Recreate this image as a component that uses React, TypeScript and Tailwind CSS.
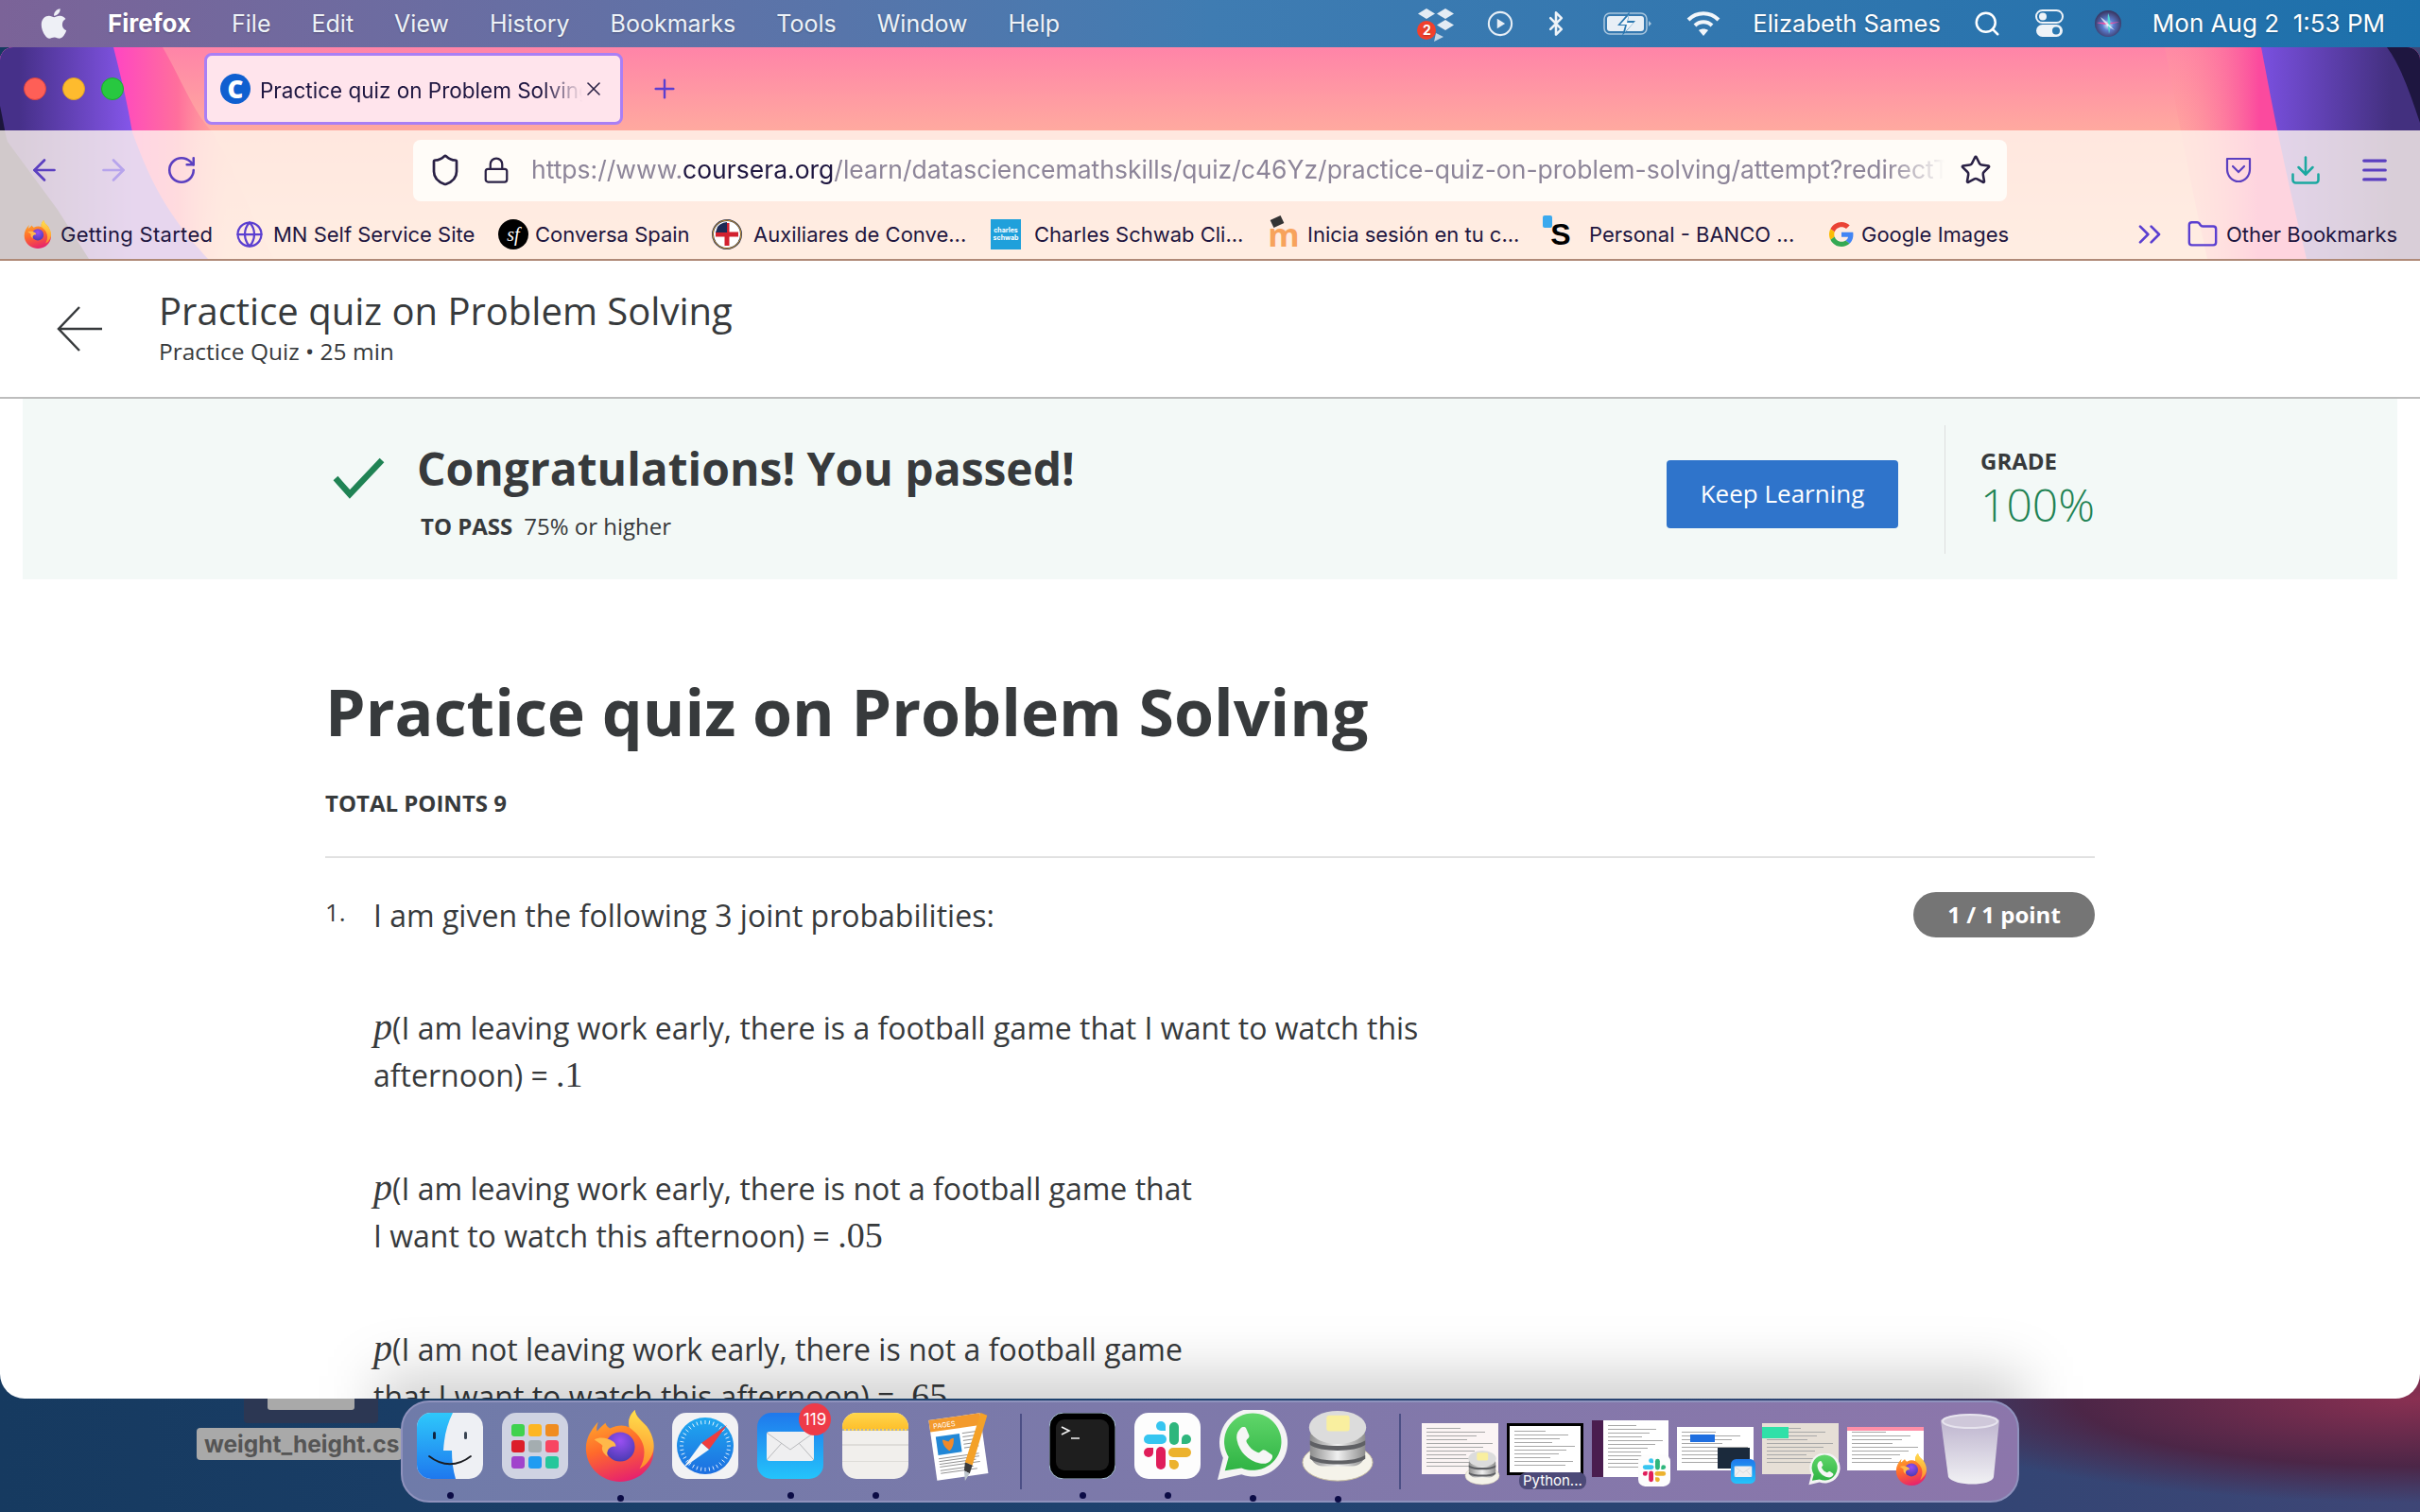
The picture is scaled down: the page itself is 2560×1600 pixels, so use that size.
import { Bluetooth, ChevronsRight, Download, Folder, Globe, Lock, Menu, Plus, RotateCw, Search, Shield, Star, ArrowLeft, ArrowRight, X } from 'lucide-react'
import { FaApple } from 'react-icons/fa'

const menuItems = ['File', 'Edit', 'View', 'History', 'Bookmarks', 'Tools', 'Window', 'Help']

function Dropbox() {
  return (
    <div className="relative h-[40px] w-[40px]">
      <svg viewBox="0 0 40 40" className="h-[40px] w-[40px]">
        <path d="M10 4l9 5.500-9 5.500-9-5.500z M30 4l9 5.500-9 5.500-9-5.500z M30 16l9 5.500-9 5.500-9-5.500z" fill="#e4ecf4" />
        <path d="M20 30l-2 9 10-5z" fill="#c4d5e6" />
      </svg>
      <span className="absolute bottom-[3px] left-0 flex h-[20px] w-[20px] items-center justify-center rounded-full bg-[#f2402c] text-[14px] font-bold leading-none text-white">2</span>
    </div>
  )
}

function Battery() {
  return (
    <svg viewBox="0 0 52 26" className="h-[26px] w-[52px]">
      <rect x="1" y="2" width="45" height="22" rx="6" fill="none" stroke="#a9c6de" strokeWidth="1.500" />
      <rect x="4" y="5" width="39" height="16" rx="3" fill="#e8eff6" />
      <path d="M48 10l3 3-3 3z" fill="#a9c6de" />
      <path d="M28 0L15 15h8l-3 11 14-16h-8z" fill="#2a77b0" />
      <path d="M27 4l-9 10h7l-2 8 9-10h-7z" fill="#f2f6fa" />
    </svg>
  )
}

function Toggles() {
  return (
    <svg viewBox="0 0 30 30" className="h-[30px] w-[30px]">
      <rect x="1" y="1" width="28" height="13" rx="6.500" fill="none" stroke="#eef3f8" strokeWidth="2" />
      <circle cx="8" cy="7.500" r="4" fill="#eef3f8" />
      <rect x="1" y="16" width="28" height="13" rx="6.500" fill="#eef3f8" />
      <circle cx="22" cy="22.500" r="4" fill="#2a77b0" />
    </svg>
  )
}

function Siri() {
  return (
    <svg viewBox="0 0 30 30" className="h-[30px] w-[30px]">
      <defs>
        <radialGradient id="siri-bg" cx="50%" cy="55%" r="60%">
          <stop offset="0%" stopColor="#e8f4ff" />
          <stop offset="35%" stopColor="#5b7ed0" />
          <stop offset="100%" stopColor="#33264a" />
        </radialGradient>
      </defs>
      <circle cx="15" cy="15" r="14" fill="url(#siri-bg)" />
      <path d="M3 14c6-1 10 1 24-1-8 3-16 4-24 1z" fill="#ec4fa0" />
      <path d="M15 4c-1 6 0 14 1 22 2-8 2-16-1-22z" fill="#54d6d0" />
      <path d="M7 8c5 3 10 9 15 14-6-3-12-8-15-14z" fill="#ffffff" opacity="0.7" />
    </svg>
  )
}

function MenuBar() {
  return (
    <div className="flex h-[50px] shrink-0 items-center justify-between bg-gradient-to-r from-[#7b6398] via-[#3f7cb2] to-[#1c70ab] pr-[37px] pl-[42px] font-['Inter',sans-serif] text-[25px] leading-none text-white [text-shadow:0_1px_2px_rgba(0,0,0,0.25)]">
      <div className="flex items-center gap-[43px]">
        <div className="flex items-center gap-[42px]">
          <FaApple className="h-[36px] w-[30px] text-[#eef0f6]" />
          <span className="text-[26px] font-bold">Firefox</span>
        </div>
        {menuItems.map((item) => (
          <span key={item} className="text-[#eef3f8]">{item}</span>
        ))}
      </div>
      <div className="flex items-center">
        <Dropbox />
        <svg viewBox="0 0 30 30" className="ml-[34px] h-[28px] w-[28px]">
          <circle cx="15" cy="15" r="13" fill="none" stroke="#e8eff6" strokeWidth="2.200" />
          <path d="M11.500 9.500l9 5.500-9 5.500z" fill="#e8eff6" />
        </svg>
        <Bluetooth className="ml-[31px] h-[36px] w-[28px] text-[#eef3f8]" strokeWidth={2.2} />
        <div className="ml-[36px]"><Battery /></div>
        <svg viewBox="0 0 36 28" className="ml-[36px] h-[28px] w-[36px]" fill="none" stroke="#f2f6fa" strokeWidth="4">
          <path d="M2 10c9-9 23-9 32 0" />
          <path d="M9 16c5-5 13-5 18 0" />
          <path d="M18 27l-5-6c3-2 7-2 10 0z" fill="#f2f6fa" stroke="none" />
        </svg>
        <span className="ml-[34px] text-[25.500px]">Elizabeth Sames</span>
        <Search className="ml-[34px] h-[30px] w-[30px]" strokeWidth={2} />
        <div className="ml-[36px]"><Toggles /></div>
        <div className="ml-[32px]"><Siri /></div>
        <span className="ml-[32px] text-[26px] whitespace-pre">Mon Aug 2  1:53 PM</span>
      </div>
    </div>
  )
}

function Wallpaper() {
  return (
    <svg viewBox="0 0 2560 224" preserveAspectRatio="none" className="absolute inset-0 h-[224px] w-[2560px]">
      <defs>
        <linearGradient id="sky" x1="0" y1="0" x2="0" y2="1">
          <stop offset="0%" stopColor="#ff84a8" />
          <stop offset="40%" stopColor="#ffaa9f" />
          <stop offset="100%" stopColor="#ffc9b0" />
        </linearGradient>
        <linearGradient id="swoosh-left" gradientUnits="userSpaceOnUse" x1="110" y1="0" x2="240" y2="0">
          <stop offset="0%" stopColor="#ff3fc8" />
          <stop offset="60%" stopColor="#ff6f9c" />
          <stop offset="100%" stopColor="#ff9f9c" stopOpacity="0.2" />
        </linearGradient>
        <linearGradient id="purple-left" gradientUnits="userSpaceOnUse" x1="20" y1="0" x2="140" y2="0">
          <stop offset="0%" stopColor="#463089" />
          <stop offset="100%" stopColor="#8556ea" />
        </linearGradient>
        <linearGradient id="swoosh-right" gradientUnits="userSpaceOnUse" x1="2290" y1="0" x2="2390" y2="0">
          <stop offset="0%" stopColor="#ff9f9c" stopOpacity="0.2" />
          <stop offset="100%" stopColor="#fb4a9e" />
        </linearGradient>
        <linearGradient id="purple-right" gradientUnits="userSpaceOnUse" x1="2392" y1="0" x2="2530" y2="0">
          <stop offset="0%" stopColor="#7a50e0" />
          <stop offset="100%" stopColor="#43307f" />
        </linearGradient>
      </defs>
      <rect width="2560" height="224" fill="url(#sky)" />
      <path d="M0 0H172C190 30 205 70 225 90C250 130 265 180 290 224H0z" fill="url(#swoosh-left)" />
      <path d="M0 0H120C130 40 135 60 140 90C155 130 170 170 220 224H0z" fill="url(#purple-left)" />
      <path d="M0 62C4 80 5 90 8 100L61 172L94 224H0z" fill="#1c163c" />
      <path d="M2560 0H2290C2300 50 2310 110 2335 224H2560z" fill="url(#swoosh-right)" />
      <path d="M2560 0H2392C2400 40 2410 100 2440 224H2560z" fill="url(#purple-right)" />
      <path d="M2560 0H2525C2540 20 2550 50 2560 80z" fill="#1e1640" />
    </svg>
  )
}

function Favicon() {
  return (
    <div className="flex h-[32px] w-[32px] shrink-0 items-center justify-center rounded-full bg-[#0f5fd0] font-['Open_Sans',sans-serif] text-[26px] leading-none font-extrabold text-white">C</div>
  )
}

function TabStrip() {
  return (
    <div className="relative flex h-[88px] shrink-0 items-center">
      <div className="ml-[25px] flex w-[191px] gap-[17px]">
        <span className="h-[24px] w-[24px] rounded-full border border-[#e0443e] bg-[#fe5f57]" />
        <span className="h-[24px] w-[24px] rounded-full border border-[#dea123] bg-[#febb2e]" />
        <span className="h-[24px] w-[24px] rounded-full border border-[#1aab29] bg-[#28c840]" />
      </div>
      <div className="flex h-[76px] w-[443px] items-center rounded-[8px] border-[3px] border-[#a97ff5] bg-[#ffe4ec] pr-[16px] pl-[14px]">
        <Favicon />
        <span className="mt-[3px] ml-[10px] flex-1 overflow-hidden font-['Inter',sans-serif] text-[22.500px] whitespace-nowrap text-[#1e1640] [mask-image:linear-gradient(to_right,black_88%,transparent)]">Practice quiz on Problem Solving</span>
        <X className="h-[24px] w-[24px] text-[#2a2145]" strokeWidth={1.6} />
      </div>
      <Plus className="ml-[28px] h-[32px] w-[32px] text-[#5b3fd0]" strokeWidth={1.8} />
    </div>
  )
}

function Toolbar() {
  return (
    <div className="relative flex h-[84px] shrink-0 items-center bg-[#fff6ef]/80">
      <div className="flex w-[437px] items-center pl-[29px]">
        <ArrowLeft className="h-[36px] w-[36px] text-[#5b3fc0]" strokeWidth={1.8} />
        <ArrowRight className="ml-[37px] h-[36px] w-[36px] text-[#b7a4ec]" strokeWidth={1.8} />
        <RotateCw className="ml-[37px] h-[34px] w-[34px] text-[#5b3fc0]" strokeWidth={1.8} />
      </div>
      <div className="flex h-[65px] w-[1686px] items-center rounded-[8px] bg-[#fffcf8] pr-[16px] pl-[16px]">
        <Shield className="h-[36px] w-[36px] shrink-0 text-[#2a2145]" strokeWidth={1.8} />
        <Lock className="ml-[21px] h-[34px] w-[30px] shrink-0 text-[#2a2145]" strokeWidth={1.8} />
        <span className="ml-[22px] flex-1 overflow-hidden font-['Inter',sans-serif] text-[26.500px] whitespace-nowrap text-[#8d8599] [mask-image:linear-gradient(to_right,black_96%,transparent)]">
          https://www.<span className="text-[#1e1640]">coursera.org</span>/learn/datasciencemathskills/quiz/c46Yz/practice-quiz-on-problem-solving/attempt?redirectToCover=true
        </span>
        <Star className="ml-[16px] h-[34px] w-[34px] shrink-0 text-[#2a2145]" strokeWidth={1.8} />
      </div>
      <div className="ml-[230px] flex items-center">
        <svg viewBox="0 0 30 30" className="h-[30px] w-[30px]" fill="none" stroke="#5b3fc0" strokeWidth="2.200">
          <path d="M3 3h24v11a12 13 0 0 1-24 0z" strokeLinejoin="round" />
          <path d="M9 11l6 6 6-6" strokeLinecap="round" />
        </svg>
        <Download className="ml-[38px] h-[36px] w-[36px] text-[#1aa8a0]" strokeWidth={1.7} />
        <Menu className="ml-[38px] h-[34px] w-[34px] text-[#5b3fc0]" strokeWidth={2.2} />
      </div>
    </div>
  )
}

function GoogleG() {
  return (
    <svg viewBox="0 0 48 48" className="h-[26px] w-[26px]">
      <path fill="#EA4335" d="M24 9.500c3.540 0 6.710 1.220 9.210 3.600l6.850-6.850C35.900 2.380 30.470 0 24 0 14.620 0 6.510 5.380 2.560 13.220l7.980 6.190C12.430 13.720 17.740 9.500 24 9.500z" />
      <path fill="#4285F4" d="M46.980 24.550c0-1.570-.15-3.090-.38-4.550H24v9.020h12.940c-.58 2.960-2.260 5.480-4.780 7.180l7.730 6c4.510-4.180 7.090-10.360 7.090-17.650z" />
      <path fill="#FBBC05" d="M10.530 28.590c-.48-1.450-.76-2.990-.76-4.590s.27-3.140.76-4.590l-7.980-6.190C.92 16.460 0 20.120 0 24c0 3.880.92 7.540 2.560 10.780l7.970-6.190z" />
      <path fill="#34A853" d="M24 48c6.480 0 11.930-2.130 15.890-5.810l-7.730-6c-2.150 1.450-4.920 2.300-8.160 2.300-6.260 0-11.570-4.220-13.470-9.910l-7.980 6.190C6.510 42.620 14.620 48 24 48z" />
    </svg>
  )
}

function FlagIcon() {
  return (
    <svg viewBox="0 0 32 32" className="h-[32px] w-[32px]">
      <circle cx="16" cy="16" r="15" fill="#fff" stroke="#1d2a55" strokeWidth="2" />
      <path d="M4 16h24M16 4v24" stroke="#d2202f" strokeWidth="5" />
      <path d="M6 8a14 14 0 0 1 10-5v11H4z" fill="#1d2a55" />
      <circle cx="16" cy="16" r="15" fill="none" stroke="#c8942e" strokeWidth="1" />
    </svg>
  )
}

function MoodleIcon() {
  return (
    <div className="relative font-['Open_Sans',sans-serif] text-[34px] leading-[30px] font-bold text-[#f7a35c]">
      <span className="absolute -top-[3px] left-[4px] h-[9px] w-[12px] -rotate-[25deg] bg-[#333]" />
      m
    </div>
  )
}

function Bookmark({ icon, label, className }: { icon: React.ReactNode; label: string; className: string }) {
  return (
    <div className={`flex shrink-0 items-center ${className}`}>
      <div className="flex w-[32px] shrink-0 justify-center">{icon}</div>
      <span>{label}</span>
    </div>
  )
}

function BookmarksBar() {
  return (
    <div className="relative flex h-[52px] shrink-0 items-center bg-[#fff6ef]/80 pl-[24px] font-['Inter',sans-serif] text-[22px] whitespace-nowrap text-[#1e1640]">
      <Bookmark className="w-[224px] gap-[8px] tracking-[0.3px]" label="Getting Started" icon={<FirefoxIcon size={30} />} />
      <Bookmark className="w-[279px] gap-[9px]" label="MN Self Service Site" icon={<Globe className="h-[30px] w-[30px] text-[#5b3fd0]" strokeWidth={1.8} />} />
      <Bookmark className="w-[226px] gap-[7px]" label="Conversa Spain" icon={<div className="flex h-[32px] w-[32px] items-center justify-center rounded-full bg-black font-['Liberation_Serif',serif] text-[20px] text-white italic">sf</div>} />
      <Bookmark className="w-[295px] gap-[12px]" label="Auxiliares de Conve..." icon={<FlagIcon />} />
      <Bookmark className="w-[294px] gap-[14px]" label="Charles Schwab Cli..." icon={<div className="flex h-[32px] w-[32px] items-center justify-center bg-[#1fa0db] text-center text-[7px] leading-[8px] font-bold text-white">charles<br />schwab</div>} />
      <Bookmark className="w-[293px] gap-[9px]" label="Inicia sesión en tu c..." icon={<MoodleIcon />} />
      <Bookmark className="w-[297px] gap-[14px]" label="Personal - BANCO ..." icon={<div className="relative font-['Liberation_Sans',sans-serif] text-[32px] leading-[32px] font-bold text-black"><span className="absolute -top-[4px] -left-[8px] h-[13px] w-[10px] rounded-[2px] bg-[#3ba9ee]" />S</div>} />
      <Bookmark className="w-[322px] gap-[5px]" label="Google Images" icon={<GoogleG />} />
      <ChevronsRight className="h-[40px] w-[40px] shrink-0 text-[#5b3fd0]" strokeWidth={1.6} />
      <Folder className="ml-[19px] h-[34px] w-[34px] shrink-0 text-[#5b3fd0]" strokeWidth={1.7} />
      <span className="ml-[8px]">Other Bookmarks</span>
    </div>
  )
}

function Equation({ lines }: { lines: [string, string, string] }) {
  return (
    <p className="mt-[70px] w-[1120px] text-[32px] leading-[50px]">
      <span className="font-['Liberation_Serif',serif] text-[40px] leading-none italic">p</span>
      {lines[0]}
      <br />
      {lines[1]}
      <span className="font-['Liberation_Serif',serif] text-[38px] leading-none">{lines[2]}</span>
    </p>
  )
}

function CoursePage() {
  return (
    <div className="relative flex-1 overflow-hidden bg-white font-['Open_Sans',sans-serif] text-[#373a3c]">
      <header className="flex h-[146px] items-center border-b-2 border-[#bdbdbd]">
        <svg viewBox="0 0 50 48" className="ml-[60px] h-[48px] w-[50px]" fill="none" stroke="#373a3c" strokeWidth="2.500">
          <path d="M24 1L2 24l22 23M2 24h46" />
        </svg>
        <div className="ml-[58px] -mt-[6px]">
          <div className="text-[40px] leading-[52px] font-normal">Practice quiz on Problem Solving</div>
          <div className="mt-[2px] text-[24.500px] leading-[30px] font-normal">Practice Quiz • 25 min</div>
        </div>
      </header>

      <section className="mx-[24px] flex h-[191px] items-center bg-[#f3f9f7] pr-[320px] pl-[328px]">
        <svg viewBox="0 0 56 46" className="mb-[22px] h-[46px] w-[56px] shrink-0" fill="none" stroke="#1f8354" strokeWidth="6.500">
          <path d="M3 22l15 17L52 3" />
        </svg>
        <div className="ml-[33px] flex-1">
          <div className="text-[48px] leading-[64px] font-bold">Congratulations! You passed!</div>
          <div className="mt-[14px] ml-[4px] text-[24px] leading-[30px] font-normal">
            <span className="font-bold">TO PASS</span>
            <span className="ml-[12px]">75% or higher</span>
          </div>
        </div>
        <button className="mt-[10px] flex h-[72px] w-[245px] items-center justify-center rounded-[4px] bg-[#2f74cb] text-[26px] font-normal text-white">Keep Learning</button>
        <div className="ml-[49px] flex h-[136px] w-[159px] flex-col justify-center border-l border-[#dcdfde] pl-[37px]">
          <div className="text-[24px] leading-[30px] font-bold">GRADE</div>
          <div className="mt-[3px] text-[48px] leading-[56px] font-light text-[#1f8354]">100%</div>
        </div>
      </section>

      <main className="mx-[344px]">
        <h1 className="mt-[92px] text-[68px] leading-[96px] font-bold">Practice quiz on Problem Solving</h1>
        <div className="mt-[33px] text-[24px] leading-[32px] font-bold">TOTAL POINTS 9</div>
        <div className="mt-[40px] h-[2px] bg-[#e1e1e1]" />
        <div className="mt-[36px] flex items-start">
          <span className="mt-[3px] w-[51px] text-[26px] leading-[36px] font-normal">1.</span>
          <div className="flex-1">
            <div className="flex items-start justify-between">
              <p className="mt-[1px] text-[32px] leading-[48px]">I am given the following 3 joint probabilities:</p>
              <span className="flex h-[48px] w-[192px] items-center justify-center rounded-full bg-[#757575] text-[24px] font-bold text-white">1 / 1 point</span>
            </div>
            <Equation lines={['(I am leaving work early, there is a football game that I want to watch this', 'afternoon) = ', '.1']} />
            <Equation lines={['(I am leaving work early, there is not a football game that', 'I want to watch this afternoon) = ', '.05']} />
            <Equation lines={['(I am not leaving work early, there is not a football game', 'that I want to watch this afternoon) = ', '.65']} />
          </div>
        </div>
      </main>
      <div className="pointer-events-none absolute right-[420px] -bottom-[46px] left-[400px] h-[70px] bg-black/20 blur-[30px]" />
    </div>
  )
}

function FinderIcon() {
  return (
    <svg viewBox="0 0 70 70" className="h-[70px] w-[70px]">
      <defs>
        <linearGradient id="finder-blue" x1="0" y1="0" x2="0" y2="1">
          <stop offset="0%" stopColor="#2ec8fb" />
          <stop offset="100%" stopColor="#1e78ee" />
        </linearGradient>
      </defs>
      <rect width="70" height="70" rx="15" fill="#eef0f4" />
      <path d="M15 0h23c-6 12-9 24-10 40h9c0 10 1 20 4 30H15A15 15 0 0 1 0 55V15A15 15 0 0 1 15 0z" fill="url(#finder-blue)" />
      <rect x="17" y="20" width="3" height="8" rx="1.500" fill="#11243f" />
      <rect x="50" y="20" width="3" height="8" rx="1.500" fill="#394452" />
      <path d="M13 46c14 11 30 11 44 0" fill="none" stroke="#1b1d22" strokeWidth="1.800" strokeLinecap="round" />
    </svg>
  )
}

function LaunchpadIcon() {
  const cells = ['#3fd24f', '#fdb623', '#f08c1f', '#dc1e2a', '#a4adb0', '#f84561', '#a044cc', '#1f9cf2', '#25c79b']
  return (
    <div className="grid h-[70px] w-[70px] grid-cols-3 content-center justify-center gap-[4px] rounded-[15px] bg-[#cfd3e2] px-[10px]">
      {cells.map((color) => (
        <span key={color} className="h-[13px] w-[14px] rounded-[3px]" style={{ backgroundColor: color }} />
      ))}
    </div>
  )
}

function FirefoxIcon({ size }: { size: number }) {
  return (
    <svg viewBox="0 0 76 78" style={{ width: size, height: size }}>
      <defs>
        <linearGradient id="ff-body" x1="0.3" y1="0" x2="0.6" y2="1">
          <stop offset="0%" stopColor="#ffb32c" />
          <stop offset="50%" stopColor="#ff6a2b" />
          <stop offset="100%" stopColor="#e6206f" />
        </linearGradient>
        <linearGradient id="ff-flame" x1="0.6" y1="0" x2="0.5" y2="1">
          <stop offset="0%" stopColor="#ffe44e" />
          <stop offset="100%" stopColor="#ff8a2a" />
        </linearGradient>
        <radialGradient id="ff-globe" cx="50%" cy="30%" r="70%">
          <stop offset="0%" stopColor="#9a4ff2" />
          <stop offset="100%" stopColor="#4b3bb4" />
        </radialGradient>
      </defs>
      <path d="M14 13c-1 5-2 7-1 10 3-4 6-6 9-9 1 3 2 4 5 6 8-4 16-4 21-1-2-8 1-14 6-19 1 8 8 12 13 18 1 2 2 5 3 8 3 8 5 15 4 22-1 16-17 30-36 30S2 64 1 44c-1-12 5-22 13-31z" fill="url(#ff-body)" />
      <path d="M48 19c-2-8 1-14 6-19 1 8 8 12 13 18 6 8 9 18 7 27-3 10-9 16-15 19 6-10 7-22 2-31-3-6-8-10-13-14z" fill="url(#ff-flame)" />
      <circle cx="38" cy="40" r="16" fill="url(#ff-globe)" />
      <path d="M10 32c6-3 14-2 20 2 2 1 4 4 3 6-2-1-5 0-8 3-1 3-2 5 0 8-5-3-8-8-6-12-2-3-6-4-9-7z" fill="#ffb84a" />
    </svg>
  )
}

function SafariIcon() {
  const ticks = Array.from({ length: 36 }, (_, i) => i * 10)
  return (
    <svg viewBox="0 0 70 70" className="h-[70px] w-[70px]">
      <defs>
        <linearGradient id="safari-face" x1="0" y1="0" x2="0" y2="1">
          <stop offset="0%" stopColor="#1fa8f0" />
          <stop offset="100%" stopColor="#1d6ee0" />
        </linearGradient>
      </defs>
      <rect width="70" height="70" rx="15" fill="#f2f2f4" />
      <circle cx="35" cy="35" r="30" fill="url(#safari-face)" />
      {ticks.map((deg) => (
        <line key={deg} x1="35" y1="8" x2="35" y2="12" stroke="#ffffff" strokeWidth="0.800" transform={`rotate(${deg} 35 35)`} />
      ))}
      <path d="M58 13L31 32l8 7z" fill="#ef3d3d" />
      <path d="M12 58l19-26 8 7z" fill="#f4f6f8" />
    </svg>
  )
}

function MailGlyph({ size }: { size: number }) {
  return (
    <svg viewBox="0 0 70 70" style={{ width: size, height: size }}>
      <defs>
        <linearGradient id="mail-bg" x1="0" y1="0" x2="0" y2="1">
          <stop offset="0%" stopColor="#1f78ec" />
          <stop offset="100%" stopColor="#24c4fb" />
        </linearGradient>
      </defs>
      <rect width="70" height="70" rx="15" fill="url(#mail-bg)" />
      <rect x="10" y="20" width="50" height="31" rx="3" fill="#efeff0" />
      <path d="M10 21l25 18 25-18M10 50l16-18M60 50L44 32" fill="none" stroke="#b9babd" strokeWidth="1" />
    </svg>
  )
}

function MailIcon() {
  return (
    <div className="relative h-[70px] w-[70px]">
      <MailGlyph size={70} />
      <span className="absolute -top-[10px] -right-[8px] flex h-[34px] w-[34px] items-center justify-center rounded-full bg-[#ee3b48] font-['Inter',sans-serif] text-[17px] leading-none text-white">119</span>
    </div>
  )
}

function NotesIcon() {
  return (
    <div className="flex h-[70px] w-[70px] flex-col overflow-hidden rounded-[15px] bg-[#f1efec]">
      <div className="h-[19px] border-b-2 border-dotted border-[#b5b0a4] bg-gradient-to-b from-[#ffd64a] to-[#fdc02c]" />
      <div className="mt-[14px] h-[2px] bg-[#dedcd8]" />
      <div className="mt-[16px] h-[1px] bg-[#dedcd8]" />
    </div>
  )
}

function PagesIcon() {
  return (
    <svg viewBox="0 0 72 80" className="h-[78px] w-[72px]">
      <g transform="rotate(-8 34 42)">
        <rect x="6" y="8" width="56" height="66" fill="#ffffff" />
        <rect x="6" y="8" width="56" height="13" fill="#f39a2c" />
        <rect x="11" y="27" width="26" height="20" fill="#2287d6" />
        <path d="M24 44c-4-3-7-9-6-13 3 1 4 2 6 3 2-2 3-3 6-3 0 5-2 10-6 13z" fill="#f0892a" />
        <path d="M11 51h44M11 54h44M11 57h40M11 60h44M11 64h36M11 67h40M40 27h16M40 31h16M40 35h16M40 39h16M40 43h16" stroke="#8a8a8a" strokeWidth="0.900" />
        <text x="10" y="18" fontFamily="Inter, sans-serif" fontSize="7.500" fill="#ffffff">PAGES</text>
      </g>
      <path d="M58 4l7 3-16 54-8-3z" fill="#f4a128" />
      <path d="M41 58l8 3-3 9-6-3z" fill="#3a3a3a" />
      <path d="M40 67l6 3-5 8z" fill="#bcc5cc" />
    </svg>
  )
}

function TerminalIcon() {
  return (
    <svg viewBox="0 0 70 70" className="h-[70px] w-[70px]">
      <rect width="70" height="70" rx="15" fill="#000" stroke="#a9c3d4" strokeWidth="1" />
      <rect x="7" y="7" width="56" height="54" rx="9" fill="#1e1e1e" />
      <path d="M13 15l8 4-8 4M23 27h9" fill="none" stroke="#f2f2f2" strokeWidth="1.700" />
    </svg>
  )
}

function SlackIcon({ size }: { size: number }) {
  return (
    <svg viewBox="0 0 70 70" style={{ width: size, height: size }}>
      <rect width="70" height="70" rx="15" fill="#fdfdfd" />
      <rect x="10" y="23" width="24" height="10" rx="5" fill="#36c5f0" />
      <path d="M24 21a5 5 0 1 1 5-5v5z" fill="#36c5f0" transform="translate(4 -2)" />
      <rect x="37" y="10" width="10" height="24" rx="5" fill="#2eb67d" />
      <path d="M50 33v-5a5 5 0 1 1 5 5z" fill="#2eb67d" />
      <rect x="36" y="37" width="24" height="10" rx="5" fill="#ecb22e" />
      <path d="M37 50h5a5 5 0 1 1-5 5z" fill="#ecb22e" />
      <rect x="23" y="36" width="10" height="24" rx="5" fill="#e01e5a" />
      <path d="M20 37v5a5 5 0 1 1-5-5z" fill="#e01e5a" />
    </svg>
  )
}

function WhatsappIcon({ size }: { size: number }) {
  return (
    <svg viewBox="0 0 76 78" style={{ width: size, height: size }}>
      <defs>
        <linearGradient id="wa-green" x1="0" y1="0" x2="0" y2="1">
          <stop offset="0%" stopColor="#60d66a" />
          <stop offset="100%" stopColor="#2fb344" />
        </linearGradient>
      </defs>
      <path d="M0 76l6-24A37 37 0 1 1 26 70z" fill="#f4f4f4" />
      <path d="M8 66l4-15A31 31 0 1 1 26 63z" fill="url(#wa-green)" />
      <path d="M25 20c2-2 5-2 6 0l3 7c1 2 0 3-2 5-1 1-1 2 0 4 3 5 6 8 11 10 2 1 3 0 4-1 2-2 3-2 5-1l6 4c2 1 2 3 1 5-3 5-8 6-13 5-13-3-23-13-25-26-1-5 1-9 4-12z" fill="#f6f6f6" />
    </svg>
  )
}

function SequelIcon({ size }: { size: number }) {
  return (
    <svg viewBox="0 0 78 80" style={{ width: size, height: size }}>
      <defs>
        <linearGradient id="pan-side" x1="0" y1="0" x2="1" y2="0">
          <stop offset="0%" stopColor="#8d8d8d" />
          <stop offset="50%" stopColor="#f0f0f0" />
          <stop offset="100%" stopColor="#8d8d8d" />
        </linearGradient>
      </defs>
      <ellipse cx="39" cy="58" rx="38" ry="20" fill="#f5f3ea" stroke="#c9bfa0" strokeWidth="1" />
      <rect x="9" y="16" width="60" height="46" rx="14" fill="url(#pan-side)" />
      <path d="M9 34c10 8 50 8 60 0v5c-10 8-50 8-60 0zM9 50c10 8 50 8 60 0v4c-10 8-50 8-60 0z" fill="#5f6064" />
      <ellipse cx="39" cy="20" rx="31" ry="18" fill="#dcdcdc" />
      <rect x="27" y="7" width="25" height="17" rx="3" fill="#f9ef9f" />
    </svg>
  )
}

function Trash() {
  return (
    <svg viewBox="0 0 62 76" className="ml-[9px] h-[76px] w-[62px]">
      <defs>
        <linearGradient id="trash-body" x1="0" y1="0" x2="0" y2="1">
          <stop offset="0%" stopColor="#b9afcb" />
          <stop offset="100%" stopColor="#f1f1f4" />
        </linearGradient>
      </defs>
      <path d="M0 8c8-9 54-9 62 0l-6 60c-2 10-42 10-48 0z" fill="url(#trash-body)" />
      <ellipse cx="31" cy="9" rx="29" ry="7" fill="#cfc8da" stroke="#e7e4ee" strokeWidth="2" />
    </svg>
  )
}

function DockItem({ children, running }: { children: React.ReactNode; running?: boolean }) {
  return (
    <div className="relative flex w-[78px] items-center justify-center">
      {children}
      {running && <span className="absolute -bottom-[21px] h-[7px] w-[7px] rounded-full bg-[#0b0b45]" />}
    </div>
  )
}

function MiniWindow({ className, lines, children }: { className: string; lines: number; children?: React.ReactNode }) {
  return (
    <div className={`relative w-[81px] shrink-0 ${className}`}>
      <div className="flex h-full flex-col gap-[3px] overflow-hidden p-[5px]">
        {Array.from({ length: lines }, (_, i) => (
          <span key={i} className="h-[1px] shrink-0 bg-[#a8a8a8]" style={{ width: `${50 + ((i * 37) % 50)}%` }} />
        ))}
      </div>
      {children}
    </div>
  )
}

function Dock() {
  return (
    <div className="absolute top-[1482px] left-[424px] flex h-[108px] w-[1712px] items-center rounded-[30px] border-2 border-[#8f92bd] bg-gradient-to-r from-[#6f7ba9] to-[#8c76ab] pl-[11px]">
      <div className="-mt-[12px] flex items-center gap-[12px]">
        <DockItem running><FinderIcon /></DockItem>
        <DockItem><LaunchpadIcon /></DockItem>
        <DockItem running><FirefoxIcon size={76} /></DockItem>
        <DockItem><SafariIcon /></DockItem>
        <DockItem running><MailIcon /></DockItem>
        <DockItem running><NotesIcon /></DockItem>
        <DockItem><PagesIcon /></DockItem>
      </div>
      <span className="mr-[25px] ml-[24px] h-[80px] w-[2px] bg-[#4c4f85]" />
      <div className="-mt-[12px] flex items-center gap-[12px]">
        <DockItem running><TerminalIcon /></DockItem>
        <DockItem running><SlackIcon size={70} /></DockItem>
        <DockItem running><WhatsappIcon size={76} /></DockItem>
        <DockItem running><SequelIcon size={78} /></DockItem>
      </div>
      <span className="mr-[22px] ml-[26px] h-[80px] w-[2px] bg-[#4c4f85]" />
      <div className="-mt-[6px] flex items-center gap-[9px]">
        <MiniWindow className="h-[54px] bg-[#fbf4f4]" lines={11}>
          <div className="absolute -right-[2px] -bottom-[12px]"><SequelIcon size={38} /></div>
        </MiniWindow>
        <MiniWindow className="h-[55px] border-[3px] border-black bg-white" lines={10}>
          <span className="absolute -bottom-[18px] left-[10px] rounded-[8px] bg-[#4c4a78] px-[4px] font-['Inter',sans-serif] text-[15px] leading-[18px] text-white">Python...</span>
        </MiniWindow>
        <MiniWindow className="h-[60px] border-l-[12px] border-[#4a1d4f] bg-white" lines={12}>
          <div className="absolute -right-[2px] -bottom-[10px]"><SlackIcon size={34} /></div>
        </MiniWindow>
        <MiniWindow className="h-[46px] bg-white" lines={9}>
          <span className="absolute top-[8px] left-[14px] h-[8px] w-[26px] bg-[#1f6fe0]" />
          <span className="absolute top-[22px] right-[4px] h-[22px] w-[34px] bg-[#1b2a3c]" />
          <div className="absolute -right-[2px] -bottom-[14px]"><MailGlyph size={26} /></div>
        </MiniWindow>
        <MiniWindow className="h-[54px] bg-[#e6dfd6]" lines={10}>
          <span className="absolute top-[4px] left-0 h-[12px] w-[28px] bg-[#2fe0a8]" />
          <div className="absolute -right-[2px] -bottom-[12px]"><WhatsappIcon size={34} /></div>
        </MiniWindow>
        <MiniWindow className="h-[46px] bg-white" lines={9}>
          <span className="absolute top-0 left-0 h-[4px] w-full bg-[#ff8fa8]" />
          <div className="absolute -right-[4px] -bottom-[16px]"><FirefoxIcon size={34} /></div>
        </MiniWindow>
        <Trash />
      </div>
    </div>
  )
}

export default function App() {
  return (
    <div className="relative h-[1600px] w-[2560px] overflow-hidden bg-[radial-gradient(560px_110px_at_100%_1480px,#8a3052_0%,#4c2647_65%,transparent_100%),linear-gradient(to_right,#163a60,#1f4370_50%,#3e4676)]">
      <MenuBar />
      <div className="relative flex h-[1430px] flex-col overflow-hidden rounded-t-[14px] rounded-b-[26px]">
        <Wallpaper />
        <TabStrip />
        <Toolbar />
        <BookmarksBar />
        <div className="relative h-[2px] shrink-0 bg-[#b08a78]" />
        <CoursePage />
      </div>
      <div className="absolute top-[1480px] left-[258px] flex h-[26px] w-[142px] justify-center rounded-b-[4px] bg-[#2c3753]">
        <div className="h-[12px] w-[92px] rounded-b-[3px] bg-[#a9a9a9]" />
      </div>
      <div className="absolute top-[1511px] left-[208px] flex h-[34px] w-[217px] items-center rounded-[4px] bg-[#a9a9a9] pl-[8px] font-['Inter',sans-serif] text-[24.500px] font-bold whitespace-nowrap text-[#555]">weight_height.cs</div>
      <Dock />
    </div>
  )
}
